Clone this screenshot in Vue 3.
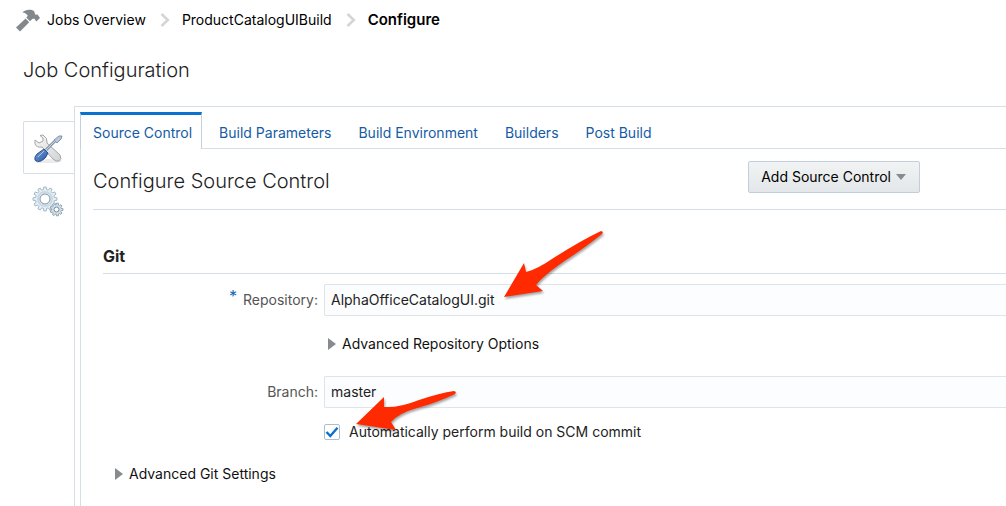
<script setup>
import { ref } from 'vue'

const crumbs = ['Jobs Overview', 'ProductCatalogUIBuild']
const tabs = ['Source Control', 'Build Parameters', 'Build Environment', 'Builders', 'Post Build']
const activeTab = ref('Source Control')
const repository = ref('AlphaOfficeCatalogUI.git')
const branch = ref('master')
const autoBuild = ref(true)

function gear(cx, cy, outer, inner, teeth) {
  const points = []
  const step = (Math.PI * 2) / teeth
  for (let i = 0; i < teeth; i++) {
    const a = i * step
    for (const [offset, r] of [[-0.32, inner], [-0.2, outer], [0.2, outer], [0.32, inner]]) {
      const t = a + offset * step
      points.push(`${(cx + Math.cos(t) * r).toFixed(2)},${(cy + Math.sin(t) * r).toFixed(2)}`)
    }
  }
  return points.join(' ')
}
const bigGear = gear(13, 13, 12, 9.5, 12)
const smallGear = gear(24.5, 23.5, 6.5, 4.8, 9)
</script>

<template>
  <div class="page">
    <nav class="crumbs" aria-label="Breadcrumb">
      <svg class="hammer" width="24" height="23" viewBox="0 0 24 23" aria-hidden="true">
        <path fill="#82888c" d="M6.500 3.500C9 .6 14.500-.3 18.200 2.200L19.300 5.800L21.600 5.600L24 9L20.300 12.600L18.200 9.600L16.200 10L14 12.300L10.300 8.700L11.800 6.800C10.700 4.600 8.800 3.800 6.500 3.500Z" />
        <path fill="#82888c" d="M9.600 9.600L13.200 13.200L4 22.400L0 18.600Z" />
        <path d="M9.800 8.800L14 13" fill="none" stroke="#fff" stroke-width="0.700" />
      </svg>
      <template v-for="crumb in crumbs" :key="crumb">
        <a href="#">{{ crumb }}</a>
        <svg class="chevron" width="10" height="14" viewBox="0 0 10 14" aria-hidden="true">
          <path d="M1.500 1L7.800 7L1.500 13" fill="none" stroke="#d3d5d8" stroke-width="2.600" />
        </svg>
      </template>
      <strong>Configure</strong>
    </nav>

    <h1>Job Configuration</h1>

    <div class="workspace">
      <div class="side">
        <button type="button" class="side-tab current" aria-label="Configure">
          <svg width="30" height="30" viewBox="0 0 30 30" aria-hidden="true">
            <defs>
              <linearGradient id="steel" x1="0" y1="0" x2="1" y2="1">
                <stop offset="0" stop-color="#f7f7f7" />
                <stop offset="1" stop-color="#d2d3d5" />
              </linearGradient>
              <linearGradient id="handle" x1="0" y1="0" x2="1" y2="1">
                <stop offset="0" stop-color="#7fa9df" />
                <stop offset="1" stop-color="#22509b" />
              </linearGradient>
            </defs>
            <ellipse cx="15" cy="27" rx="14" ry="2" fill="#ebebeb" />
            <path d="M7 1.500L10 1Q15 4 14 9L27 21Q29 25 26 27Q23 28 20 25L9 13Q4 14 2 10L2 6L6 9L10 7L10 4Z" fill="url(#steel)" stroke="#a2a5a8" />
            <path d="M13 16L23 6" stroke="#8998a9" stroke-width="3" />
            <path d="M13 16L23 6" stroke="#c6d2df" stroke-width="1" />
            <path d="M21 6L26 2L29 2L28 5L24 9Z" fill="#b9c8da" stroke="#8396ab" />
            <path d="M11 15L15 19Q13 25 8 27Q4 29 2 26Q1 23 4 20Z" fill="url(#handle)" stroke="#2d5594" />
            <path d="M11 17L5 23" stroke="#a5c4ec" stroke-width="1" />
          </svg>
        </button>
        <button type="button" class="side-tab" aria-label="Advanced">
          <svg width="32" height="31" viewBox="0 0 32 31" aria-hidden="true">
            <polygon :points="bigGear" fill="#e6eff5" stroke="#a3b8c8" />
            <circle cx="13" cy="13" r="7" fill="none" stroke="#c9d8e4" stroke-width="2" />
            <circle cx="13" cy="13" r="5" fill="#fff" stroke="#8094a3" />
            <polygon :points="smallGear" fill="#d5e2eb" stroke="#8fa5b6" />
            <circle cx="24.500" cy="23.500" r="2.500" fill="#fff" stroke="#748a9a" />
          </svg>
        </button>
      </div>

      <main class="panel">
        <div class="inner">
          <div class="tabs">
            <a
              v-for="tab in tabs"
              :key="tab"
              href="#"
              :class="{ active: tab === activeTab }"
              @click.prevent="activeTab = tab"
            >{{ tab }}</a>
          </div>

          <section class="content">
            <header class="section-head">
              <h2>Configure Source Control</h2>
              <button type="button" class="add">
                Add Source Control
                <svg width="10" height="6" viewBox="0 0 10 6" aria-hidden="true"><path d="M0 0H10L5 6Z" fill="#878b90" /></svg>
              </button>
            </header>

            <div class="git">
              <h3>Git</h3>
              <form class="fields" @submit.prevent>
                <label for="repository"><span class="required">*</span>Repository:</label>
                <input id="repository" v-model="repository" class="text" type="text" required />

                <button type="button" class="disclosure nested">
                  <svg width="8" height="12" viewBox="0 0 8 12" aria-hidden="true"><path d="M0 0L8 6L0 12Z" fill="#878b90" /></svg>
                  Advanced Repository Options
                </button>

                <label for="branch">Branch:</label>
                <input id="branch" v-model="branch" class="text" type="text" />

                <label class="check">
                  <span class="box">
                    <input v-model="autoBuild" type="checkbox" />
                    <svg v-if="autoBuild" width="16" height="16" viewBox="0 0 16 16" aria-hidden="true">
                      <path d="M2.500 8L6.300 12L13.500 3.800" fill="none" stroke="#0b6fd0" stroke-width="2.400" />
                    </svg>
                  </span>
                  Automatically perform build on SCM commit
                </label>
              </form>
              <button type="button" class="disclosure settings">
                <svg width="8" height="12" viewBox="0 0 8 12" aria-hidden="true"><path d="M0 0L8 6L0 12Z" fill="#878b90" /></svg>
                Advanced Git Settings
              </button>
            </div>
          </section>
        </div>
      </main>
    </div>

    <svg class="arrow to-repository" width="106" height="76" viewBox="0 0 106 76" aria-hidden="true">
      <path d="M4 69L24 35L26 44Q36 42 55 29Q82 12 101 3L103 4L102 6Q83 21 66 32Q44 47 36 57L43 63Z" />
    </svg>
    <svg class="arrow to-checkbox" width="110" height="52" viewBox="0 0 110 52" aria-hidden="true">
      <path d="M4 38L32 11V21Q47 22 67 14Q88 7 102 5L104 6L103 8Q84 17 65 22Q47 27 39 36L44 44Z" />
    </svg>
  </div>
</template>

<style>
body { margin: 0; background: #fff; }
</style>

<style scoped>
.page {
  position: relative;
  box-sizing: border-box;
  display: flex;
  flex-direction: column;
  min-height: 100vh;
  padding-top: 8px;
  overflow: hidden;
  color: #222;
  font: 14px/20px Inter, "Liberation Sans", sans-serif;
}
h1, h2, h3 { margin: 0; }
button { font: inherit; cursor: pointer; }
a { color: inherit; text-decoration: none; }
svg { display: block; flex: none; }

.crumbs {
  display: flex;
  align-items: center;
  height: 24px;
  padding-left: 16px;
  color: #000;
}
.hammer { margin-right: 7px; }
.chevron { margin: 0 12px 0 14px; }
.crumbs strong { font-size: 15px; font-weight: 600; }

h1 {
  padding: 24px 0 22px 23px;
  font-size: 20px;
  line-height: 28px;
  font-weight: 300;
}

.workspace { display: flex; flex: 1; }
.side {
  display: flex;
  flex-direction: column;
  width: 51px;
  margin: 15px 0 0 23px;
}
.side-tab {
  display: flex;
  justify-content: center;
  align-items: center;
  height: 53px;
  padding: 2px 2px 0 0;
  border: 1px solid transparent;
  background: none;
}
.side-tab.current {
  border-color: #d6dfe6;
  border-right: 0;
  border-radius: 2px 0 0 2px;
  background: #fff;
}

.panel {
  display: flex;
  flex: 1;
  min-width: 0;
  padding: 5px 0 0 5px;
  border-top: 1px solid #d6dfe6;
  border-left: 1px solid #d6dfe6;
}
.inner {
  flex: 1;
  min-width: 0;
  border-left: 1px solid #d6dfe6;
}
.tabs {
  display: flex;
  height: 36px;
  margin-left: -1px;
  border-bottom: 1px solid #d6dfe6;
  color: #145ba6;
}
.tabs a {
  box-sizing: border-box;
  height: 37px;
  margin-right: 4px;
  padding: 11px 10px 0 13px;
}
.tabs a.active {
  padding: 8px 9px 0 12px;
  border: 1px solid #c5d0da;
  border-top: 3px solid #0b72d0;
  border-bottom: 0;
  background: #fff;
}

.content { padding-left: 12px; }
.section-head {
  display: flex;
  align-items: center;
  justify-content: space-between;
  height: 60px;
  padding-right: 86px;
  border-bottom: 1px solid #d6dfe6;
}
h2 {
  padding-top: 4px;
  font-size: 20px;
  line-height: 28px;
  font-weight: 300;
}
.add {
  display: flex;
  align-items: center;
  gap: 5px;
  height: 32px;
  margin-bottom: 4px;
  padding: 0 13px 0 12px;
  border: 1px solid #c3ceda;
  border-radius: 2px;
  background: linear-gradient(#f1f3f4, #e3e7e9);
  color: #000;
}

.git { padding: 34px 0 0 10px; }
h3 {
  padding-bottom: 5px;
  border-bottom: 1px solid #d6dfe6;
  font-size: 16px;
  line-height: 24px;
  font-weight: 700;
}
.fields {
  display: grid;
  grid-template-columns: 215px 1fr;
  column-gap: 6px;
  align-items: center;
  padding-top: 10px;
}
.fields > label { color: #555; text-align: right; }
.required {
  margin-right: 6px;
  color: #1067b5;
  font-size: 16px;
  vertical-align: 3px;
  line-height: 12px;
}
.text {
  box-sizing: border-box;
  width: 100%;
  height: 32px;
  padding: 0 6px 2px;
  border: 1px solid #dfe4e7;
  border-right: 0;
  border-radius: 2px 0 0 2px;
  background: #fcfdfe;
  color: #222;
  font: inherit;
}
.disclosure {
  display: flex;
  align-items: center;
  gap: 6px;
  padding: 0;
  border: 0;
  background: none;
  color: #111;
}
.nested {
  grid-column: 2;
  height: 60px;
  padding: 0 0 4px 4px;
}
.fields > .check {
  grid-column: 2;
  display: flex;
  align-items: center;
  gap: 9px;
  height: 48px;
  color: #222;
}
.box { display: grid; }
.box > * { grid-area: 1 / 1; }
.box input {
  appearance: none;
  box-sizing: border-box;
  width: 16px;
  height: 16px;
  margin: 0;
  border: 1px solid #afbecb;
  border-radius: 2px;
  background: #fff;
}
.box svg { pointer-events: none; }
.settings { margin: 8px 0 20px 12px; }

/* Callout arrows lie over the form. */
.arrow {
  position: absolute;
  fill: #ff2a00;
  pointer-events: none;
  filter: drop-shadow(1px 2px 1px rgb(0 0 0 / 35%));
}
.to-repository { left: 500px; top: 228px; }
.to-checkbox { left: 352px; top: 386px; }
</style>
